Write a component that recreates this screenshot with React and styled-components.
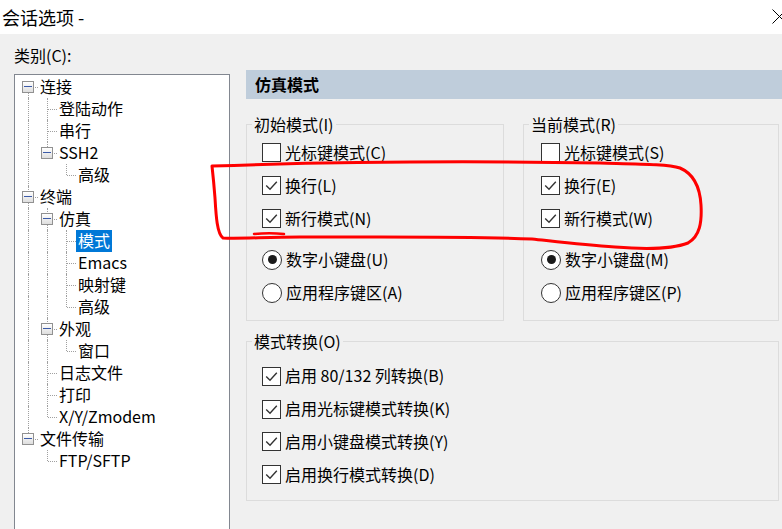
import React from "react";
import styled, { createGlobalStyle } from "styled-components";

const GlobalStyle = createGlobalStyle`
  body {
    margin: 0;
    background: #f0f0f0;
    font-family: "Noto Sans CJK SC", "Noto Sans", sans-serif;
    color: #000;
  }
`;

const Window = styled.div`
  position: relative;
  width: 782px;
  height: 529px;
  overflow: hidden;
  display: flex;
  flex-direction: column;
  background: #f0f0f0;
`;

const TitleBar = styled.div`
  height: 34px;
  flex: none;
  background: #fff;
  display: flex;
  align-items: center;
  justify-content: space-between;
  padding-left: 2px;
  font-size: 18px;
  line-height: 32px;
`;

const CloseIcon = styled.svg`
  width: 15px;
  height: 15px;
  margin-right: -5px;
  margin-top: -2px;
`;

const Body = styled.div`
  flex: 1;
  display: flex;
  min-height: 0;
`;

const LeftPane = styled.div`
  width: 216px;
  margin-left: 14px;
  display: flex;
  flex-direction: column;
`;

const CategoryLabel = styled.div`
  margin-top: 10px;
  font-size: 16px;
  line-height: 22px;
  height: 22px;
  margin-bottom: 8px;
`;

const Tree = styled.div`
  flex: 1;
  margin-bottom: -20px;
  background: #fff;
  border: 1px solid #828790;
  padding: 1px 0 0 4px;
`;

const TreeRow = styled.div`
  display: flex;
  height: 22px;
  align-items: stretch;
`;

const Guide = styled.div`
  position: relative;
  width: 19px;
  flex: none;

  &::before {
    content: "";
    position: absolute;
    left: 9px;
    display: ${(p) => (p.$up || p.$down ? "block" : "none")};
    top: ${(p) => (p.$up ? "0" : "11px")};
    bottom: ${(p) => (p.$down ? "0" : "11px")};
    border-left: 1px dotted #a0a0a0;
  }

  &::after {
    content: "";
    position: absolute;
    display: ${(p) => (p.$right ? "block" : "none")};
    left: 10px;
    right: 0;
    top: 11px;
    border-top: 1px dotted #a0a0a0;
  }
`;

const Expander = styled.span`
  position: absolute;
  z-index: 1;
  left: 3px;
  top: 5px;
  width: 12px;
  height: 12px;
  box-sizing: border-box;
  border: 1px solid #919191;
  background: linear-gradient(#ffffff, #dedede);

  &::after {
    content: "";
    position: absolute;
    left: 1px;
    right: 1px;
    top: 4px;
    height: 1px;
    background: #3c5ba8;
  }
`;

const NodeLabel = styled.span`
  padding: 0 2px;
  font-size: 16px;
  line-height: 21px;
  height: 22px;
  white-space: nowrap;
  background: ${(p) => (p.$selected ? "#0078d7" : "transparent")};
  color: ${(p) => (p.$selected ? "#fff" : "#000")};
`;

const RightPane = styled.div`
  width: 533px;
  margin-left: 16px;
  padding-top: 36px;
  display: flex;
  flex-direction: column;
`;

const SectionHeader = styled.div`
  margin-right: -3px;
  height: 29px;
  background: #bfcddb;
  padding-left: 9px;
  font-size: 16px;
  font-weight: 700;
  line-height: 28px;
`;

const GroupRow = styled.div`
  display: flex;
  gap: 19px;
  margin-top: 15px;
`;

const Group = styled.fieldset`
  margin: ${(p) => (p.$top ? `${p.$top}px` : "0")} 0 0 0;
  padding: 0;
  min-width: 0;
  width: ${(p) => p.$width}px;
  box-sizing: border-box;
  border: 1px solid #dcdcdc;
`;

const Legend = styled.legend`
  margin-left: 5px;
  padding: 0 2px;
  font-size: 16px;
  line-height: 20px;
`;

const GroupBody = styled.div`
  padding: ${(p) => p.$padTop}px 0 ${(p) => p.$padBottom}px ${(p) => p.$inset}px;
`;

const OptionList = styled.div`
  display: flex;
  flex-direction: column;
  margin-top: ${(p) => p.$gap || 0}px;
`;

const Option = styled.div`
  display: flex;
  align-items: center;
  height: ${(p) => p.$h || 33}px;
  gap: 4px;
  font-size: 16px;
  line-height: 22px;
  white-space: nowrap;

  & > span:last-child {
    margin-top: -2px;
  }
`;

const Box = styled.span`
  width: 19px;
  height: 19px;
  flex: none;
  box-sizing: border-box;
  border: 1px solid #333;
  background: #fff;
  display: flex;
  align-items: center;
  justify-content: center;
`;

const Radio = styled.span`
  width: 20px;
  height: 20px;
  flex: none;
  box-sizing: border-box;
  border: 1px solid #333;
  border-radius: 50%;
  background: #fff;
  display: flex;
  align-items: center;
  justify-content: center;

  &::after {
    content: "";
    display: ${(p) => (p.$on ? "block" : "none")};
    width: 9px;
    height: 9px;
    border-radius: 50%;
    background: #1a1a1a;
  }
`;

const Markup = styled.svg`
  position: absolute;
  left: 0;
  top: 0;
  pointer-events: none;
`;

const tree = [
  {
    label: "连接",
    children: [
      { label: "登陆动作" },
      { label: "串行" },
      { label: "SSH2", children: [{ label: "高级" }] },
    ],
  },
  {
    label: "终端",
    children: [
      {
        label: "仿真",
        children: [
          { label: "模式", selected: true },
          { label: "Emacs" },
          { label: "映射键" },
          { label: "高级" },
        ],
      },
      { label: "外观", children: [{ label: "窗口" }] },
      { label: "日志文件" },
      { label: "打印" },
      { label: "X/Y/Zmodem" },
    ],
  },
  { label: "文件传输", children: [{ label: "FTP/SFTP" }] },
];

function flatten(nodes, depth, trail, out) {
  nodes.forEach((n, i) => {
    const last = i === nodes.length - 1;
    out.push({ ...n, depth, trail, last, first: depth === 0 && i === 0 });
    if (n.children) flatten(n.children, depth + 1, [...trail, !last], out);
  });
  return out;
}

const rows = flatten(tree, 0, [], []);

const Check = ({ checked }) => (
  <Box>
    {checked && (
      <svg width="17" height="17" viewBox="0 0 17 17">
        <polyline
          points="3.2,8.6 7,12.2 13.8,4.8"
          fill="none"
          stroke="#333"
          strokeWidth="1.4"
        />
      </svg>
    )}
  </Box>
);

const CheckOption = ({ checked, h, children }) => (
  <Option $h={h}>
    <Check checked={checked} />
    <span>{children}</span>
  </Option>
);

const RadioOption = ({ on, children }) => (
  <Option>
    <Radio $on={on} />
    <span>{children}</span>
  </Option>
);

const ModeGroup = ({ title, width, inset, keys }) => (
  <Group $width={width}>
    <Legend>{title}</Legend>
    <GroupBody $padTop={2} $padBottom={11} $inset={inset}>
      <OptionList>
        <CheckOption>光标键模式({keys[0]})</CheckOption>
        <CheckOption checked>换行({keys[1]})</CheckOption>
        <CheckOption checked>新行模式({keys[2]})</CheckOption>
      </OptionList>
      <OptionList $gap={8}>
        <RadioOption on>数字小键盘({keys[3]})</RadioOption>
        <RadioOption>应用程序键区({keys[4]})</RadioOption>
      </OptionList>
    </GroupBody>
  </Group>
);

export default function App() {
  return (
    <>
      <GlobalStyle />
      <Window>
        <TitleBar>
          <span>会话选项 -</span>
          <CloseIcon viewBox="0 0 15 15">
            <path d="M0.5 0.5 L14.5 14.5 M14.5 0.5 L0.5 14.5" stroke="#000" strokeWidth="1" />
          </CloseIcon>
        </TitleBar>
        <Body>
          <LeftPane>
            <CategoryLabel>类别(C):</CategoryLabel>
            <Tree>
              {rows.map((r, idx) => (
                <TreeRow key={idx}>
                  {r.trail.map((cont, i) => (
                    <Guide key={i} $up={cont} $down={cont} />
                  ))}
                  <Guide $up={!r.first} $down={!r.last} $right>
                    {r.children && <Expander />}
                  </Guide>
                  <NodeLabel $selected={r.selected}>{r.label}</NodeLabel>
                </TreeRow>
              ))}
            </Tree>
          </LeftPane>
          <RightPane>
            <SectionHeader>仿真模式</SectionHeader>
            <GroupRow>
              <ModeGroup title="初始模式(I)" width={258} inset={15} keys={["C", "L", "N", "U", "A"]} />
              <ModeGroup title="当前模式(R)" width={256} inset={17} keys={["S", "E", "W", "M", "P"]} />
            </GroupRow>
            <Group $width={533} $top={10}>
              <Legend>模式转换(O)</Legend>
              <GroupBody $padTop={8} $padBottom={9} $inset={15}>
                <OptionList>
                  <CheckOption checked h={34}>启用 80/132 列转换(B)</CheckOption>
                  <CheckOption checked h={32}>启用光标键模式转换(K)</CheckOption>
                  <CheckOption checked>启用小键盘模式转换(Y)</CheckOption>
                  <CheckOption checked>启用换行模式转换(D)</CheckOption>
                </OptionList>
              </GroupBody>
            </Group>
          </RightPane>
        </Body>
        <Markup width="782" height="529" viewBox="0 0 782 529">
          <path
            d="M212 166 C 330 162 480 161 600 163 C 640 164 668 164 680 168 C 694 174 700 188 701 205 C 702 222 700 236 688 243 C 670 250 640 249 615 247 C 585 245 560 242 532 239 C 470 236 380 237 300 237 C 265 237 240 239 223 238 C 217 234 216 215 215 198 C 214 185 213 175 212 166"
            fill="none"
            stroke="#ff0000"
            strokeWidth="3"
            strokeLinecap="round"
            strokeLinejoin="round"
          />
          <path
            d="M254 234 C 264 233 275 233 284 234"
            fill="none"
            stroke="#ff0000"
            strokeWidth="2.5"
            strokeLinecap="round"
          />
        </Markup>
      </Window>
    </>
  );
}
